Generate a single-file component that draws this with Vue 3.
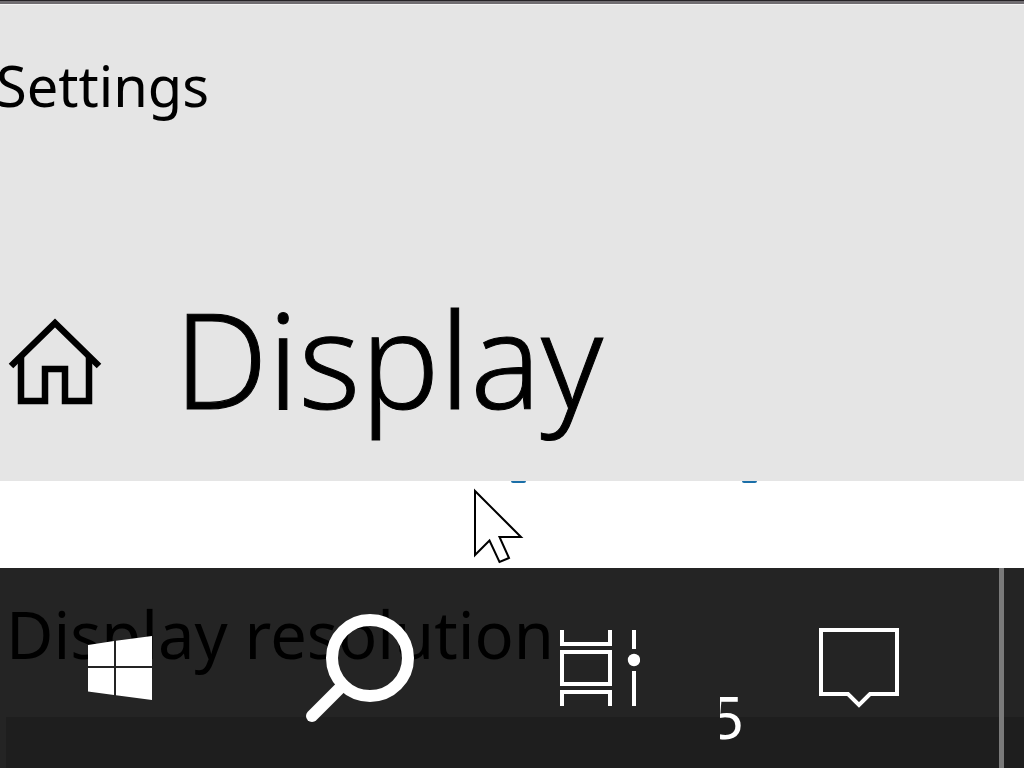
<script setup>
const descenders = [{ left: 511 }, { left: 742 }]
</script>

<template>
  <div class="screen">
    <header class="window-head">
      <p class="app-name">Settings</p>
      <div class="title-row">
        <a class="home" href="#" aria-label="Home">
          <svg width="94" height="90" viewBox="0 0 94 90" fill="none" stroke="#000" stroke-width="6.500">
            <path d="M3 50L47 7L91 50" />
            <path d="M13 41V85H37V53H57V85H81V41" />
          </svg>
        </a>
        <h1>Display</h1>
      </div>
    </header>

    <main class="content">
      <i v-for="d in descenders" :key="d.left" class="descender" :style="{ left: d.left + 'px' }"></i>
    </main>

    <footer class="taskbar">
      <div class="behind">
        <h2>Display resolution</h2>
        <div class="field"></div>
      </div>
      <nav class="items">
        <button class="item" aria-label="Start">
          <svg width="64" height="64" viewBox="0 0 64 64" fill="#fff">
            <rect x="24" y="6" width="6" height="54" fill="#242424" />
            <rect y="29" width="64" height="4" fill="#242424" />
            <path d="M0 9L26 5V30H0ZM28 4.700L64 0V30H28ZM0 32H26V59L0 55.500ZM28 32H64V64L28 59.300Z" />
          </svg>
        </button>
        <button class="item" aria-label="Search">
          <svg width="108" height="108" viewBox="0 0 108 108" fill="none" stroke="#fff">
            <circle cx="64" cy="44" r="38" stroke-width="12" />
            <path d="M37 71L6 102" stroke-width="12" stroke-linecap="round" />
          </svg>
        </button>
        <button class="item" aria-label="Task View">
          <svg width="80" height="76" viewBox="0 0 80 76" fill="none" stroke="#fff" stroke-width="4">
            <path d="M2 0V14H50V0M2 76V62H50V76M2 22H50V54H2ZM74 0V19M74 41V76" />
            <circle cx="74" cy="30" r="6.200" fill="#fff" stroke="none" />
          </svg>
        </button>
        <div class="clock"><span>5</span></div>
        <button class="item" aria-label="Action center">
          <svg width="80" height="80" viewBox="0 0 80 80" fill="none" stroke="#fff" stroke-width="4">
            <path d="M2 2H78V66H51L40 77L29 66H2Z" />
          </svg>
        </button>
      </nav>
      <button class="show-desktop" aria-label="Show desktop"></button>
    </footer>

    <svg class="cursor" width="52" height="76" viewBox="0 0 52 76">
      <path d="M3 3V67L17.500 52.500L27.500 74L37 70L27.500 49H49Z" fill="#fff" stroke="#000" stroke-width="2" />
    </svg>
  </div>
</template>

<style>
body {
  margin: 0;
}
</style>

<style scoped>
.screen {
  position: relative;
  display: flex;
  flex-direction: column;
  min-height: 100vh;
  overflow: hidden;
  background: #fff;
  color: #000;
  font-family: "Noto Sans", "Open Sans", sans-serif;
}
.window-head {
  box-sizing: border-box;
  border-top: 1px solid #252226;
  background: linear-gradient(#706d71 3px, #f5f5f5 3px, #f5f5f5 4px, #e5e5e5 4px);
  padding: 43px 0 28px;
}
.app-name {
  margin: 0 0 0 -4px;
  font-size: 56px;
  line-height: 82px;
}
.title-row {
  display: flex;
  align-items: center;
  gap: 72px;
  margin-top: 137px;
  padding-left: 8px;
}
.home {
  display: block;
  height: 84px;
}
svg {
  display: block;
}
h1 {
  margin: 0;
  font-size: 132px;
  font-weight: 350;
  line-height: 190px;
  -webkit-text-stroke: 1px #000;
}
.content {
  position: relative;
  flex: 1;
}
.descender {
  position: absolute;
  top: 0;
  width: 15px;
  height: 2px;
  border-radius: 0 0 8px 8px;
  background: #1b6fa8;
}
.taskbar {
  position: relative;
  display: flex;
  height: 200px;
  background: #242424;
}
.behind {
  position: absolute;
  inset: 0;
  display: flex;
  flex-direction: column;
  padding-left: 6px;
  overflow: hidden;
}
h2 {
  margin: 19px 0 0;
  font-size: 65px;
  font-weight: 400;
  line-height: 94px;
  white-space: nowrap;
}
.field {
  flex: 1;
  margin-top: 36px;
  background: #1e1e1e;
}
.items {
  position: relative;
  display: flex;
  flex: 1;
}
button {
  border: 0;
  padding: 0;
  background: none;
}
.item {
  display: flex;
  flex: 0 1 240px;
  align-items: center;
  justify-content: center;
}
.clock {
  display: flex;
  align-items: flex-end;
  justify-content: flex-end;
  width: 24px;
  margin-right: -5px;
  padding-bottom: 10px;
  overflow: hidden;
  color: #fff;
  font-size: 58px;
  line-height: 82px;
}
.show-desktop {
  position: relative;
  width: 25px;
  border-left: 5px solid #7a7a7a;
}
.cursor {
  position: absolute;
  top: 488px;
  left: 472px;
}
</style>
